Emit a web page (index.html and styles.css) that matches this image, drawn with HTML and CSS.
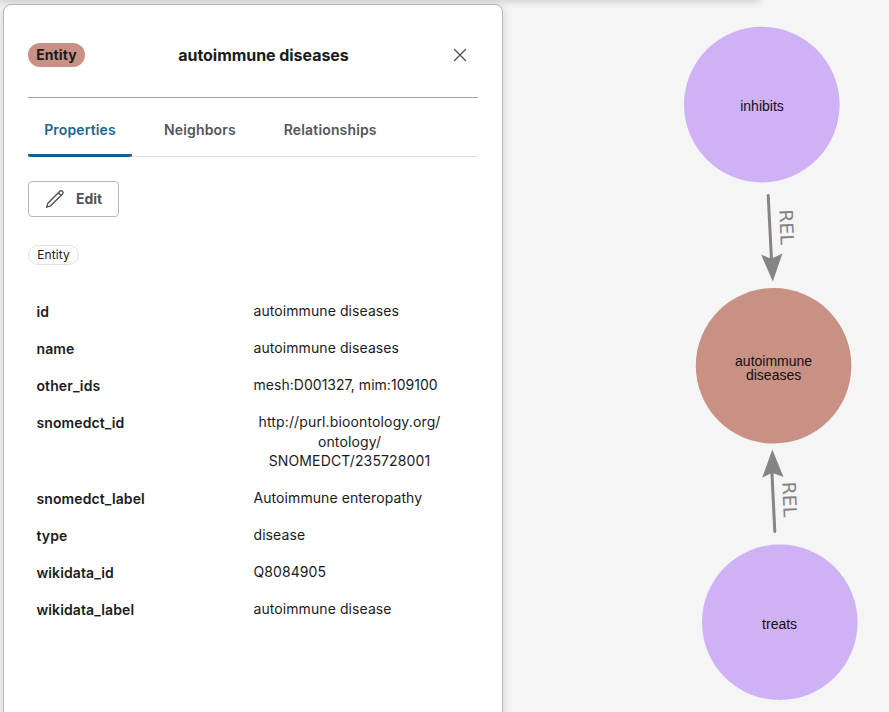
FILE: index.html
```html
<!DOCTYPE html>
<html lang="en">
<head>
<meta charset="utf-8">
<title>autoimmune diseases</title>
<link rel="stylesheet" href="styles.css">
</head>
<body>
<div class="toolbar-shadow"></div>
<main class="layout">
  <section class="panel">
    <header class="panel-header">
      <span class="tag">Entity</span>
      <h1 class="title">autoimmune diseases</h1>
      <button class="close" aria-label="Close">
        <svg width="14" height="14" viewBox="0 0 14 14"><path d="M1.5 1.5 12.5 12.5M12.5 1.5 1.5 12.5" fill="none" stroke="#535660" stroke-width="1.4" stroke-linecap="round"/></svg>
      </button>
    </header>
    <nav class="tabs">
      <a class="tab active">Properties</a>
      <a class="tab">Neighbors</a>
      <a class="tab">Relationships</a>
    </nav>
    <button class="edit">
      <svg width="20" height="20" viewBox="0 0 20 20" fill="none" stroke="#50535b" stroke-width="1.4" stroke-linejoin="round" stroke-linecap="round"><path d="M1.6 18.2 2.7 14.6 14.8 2.3Q16.2 1.1 17.5 2.3T17.6 5.1L5.3 17.1ZM13.4 3.8 16 6.6"/></svg>
      <span>Edit</span>
    </button>
    <span class="chip">Entity</span>
    <dl class="props">
      <div class="row"><dt>id</dt><dd>autoimmune diseases</dd></div>
      <div class="row"><dt>name</dt><dd>autoimmune diseases</dd></div>
      <div class="row"><dt>other_ids</dt><dd class="mixed">mesh:D001327, mim:109100</dd></div>
      <div class="row"><dt>snomedct_id</dt><dd class="link">http://purl.bioontology.org/<br>ontology/<br>SNOMEDCT/235728001</dd></div>
      <div class="row"><dt>snomedct_label</dt><dd>Autoimmune enteropathy</dd></div>
      <div class="row"><dt>type</dt><dd>disease</dd></div>
      <div class="row"><dt>wikidata_id</dt><dd>Q8084905</dd></div>
      <div class="row"><dt>wikidata_label</dt><dd>autoimmune disease</dd></div>
    </dl>
  </section>
  <svg class="graph" width="386" height="712" viewBox="503 0 386 712">
    <circle cx="761.8" cy="104.6" r="77.8" fill="#ceb2f5"/>
    <circle cx="773.6" cy="365.8" r="77.8" fill="#c89184"/>
    <circle cx="779.8" cy="622.3" r="77.8" fill="#ceb2f5"/>
    <g stroke="#848484" stroke-width="3" stroke-linecap="round">
      <path d="M768.2 195.5 771.4 258"/>
      <path d="M774.8 531.5 771.9 472"/>
    </g>
    <g fill="#848484">
      <path d="M772.8 281.5 761 254.5 771.4 258.8 782.4 253.5Z"/>
      <path d="M772.3 449.5 762.2 477.8 772 472.8 783.5 477Z"/>
    </g>
    <g class="edge-label">
      <text transform="translate(779.2 209.8) rotate(87.4)" textLength="35.4" lengthAdjust="spacingAndGlyphs">REL</text>
      <text transform="translate(782.2 482) rotate(87.4)" textLength="35.4" lengthAdjust="spacingAndGlyphs">REL</text>
    </g>
    <g class="node-label">
      <text x="762" y="110.8">inhibits</text>
      <text x="773.6" y="365.8"><tspan x="773.6">autoimmune</tspan><tspan x="773.6" dy="14">diseases</tspan></text>
      <text x="779.6" y="628.6">treats</text>
    </g>
  </svg>
</main>
</body>
</html>
```
FILE: styles.css
```css
* { box-sizing: border-box; }
body {
  margin: 0;
  height: 712px;
  overflow: hidden;
  background: #f5f5f5;
  color: #1b1b1d;
  font-family: Inter, "Liberation Sans", sans-serif;
}
.toolbar-shadow {
  position: absolute;
  top: -20px;
  left: -20px;
  width: 779px;
  height: 20px;
  box-shadow: 0 1px 8px rgba(0, 0, 0, .2);
}
.layout {
  position: relative;
  display: flex;
  height: 712px;
  padding-left: 3px;
}
.panel {
  flex: none;
  width: 500px;
  height: 740px;
  margin-top: 4px;
  padding: 0 24px;
  background: #fff;
  border: 1px solid #b5b7ba;
  border-radius: 8px;
  box-shadow: 0 3px 10px rgba(20, 20, 50, .16);
}
.panel-header {
  display: flex;
  align-items: center;
  justify-content: space-between;
  height: 93px;
  padding-top: 8px;
  border-bottom: 1px solid #a2a4a8;
}
.tag {
  width: 57px;
  height: 24px;
  border-radius: 12px;
  background: #c89184;
  font-size: 14px;
  font-weight: 700;
  line-height: 24px;
  text-align: center;
  letter-spacing: .1px;
}
.title {
  margin: 0 11px 0 0;
  font-size: 16px;
  font-weight: 700;
  letter-spacing: -.05px;
}
button { font-family: inherit; background: none; }
.close {
  display: flex;
  border: 0;
  margin-right: 11px;
  padding: 0;
}
.tabs {
  display: flex;
  height: 59px;
  border-bottom: 1px solid #e0e1e3;
}
.tab {
  display: flex;
  justify-content: center;
  height: 59px;
  padding: 0 16px;
  margin-right: 16px;
  color: #53565c;
  font-size: 14px;
  font-weight: 600;
  line-height: 64px;
  letter-spacing: .15px;
}
.tab.active {
  color: #1b6694;
  background: linear-gradient(#17608b, #17608b) bottom / 100% 3px no-repeat;
  border-radius: 2px;
  width: 104px;
}
.edit {
  display: flex;
  align-items: center;
  gap: 11px;
  width: 91px;
  height: 36px;
  margin-top: 24px;
  padding: 0 0 1px 16px;
  border: 1px solid #b5b7ba;
  border-radius: 4px;
  color: #50535b;
  font-size: 14px;
  font-weight: 700;
}
.chip {
  display: block;
  width: 51px;
  height: 20px;
  margin-top: 28px;
  border: 1px solid #e0e1e3;
  border-radius: 10px;
  font-size: 12px;
  line-height: 18px;
  text-align: center;
  letter-spacing: .1px;
}
.props { margin: 27.4px 0 0; padding: 0 8.5px; }
.row {
  display: grid;
  grid-template-columns: 217px max-content;
  padding: 8.5px 0;
  font-size: 14px;
  line-height: 20px;
}
dt { font-weight: 600; position: relative; top: 1px; letter-spacing: .1px; }
dd { margin: 0; letter-spacing: .08px; }
.mixed { letter-spacing: .03px; }
.link { text-align: center; padding-left: 5px; line-height: 19.8px; letter-spacing: .14px; }
.graph { flex: none; }
.node-label {
  font: 14px "Liberation Sans", sans-serif;
  text-anchor: middle;
  fill: #111;
}
.edge-label {
  font: 18.5px "DejaVu Sans", sans-serif;
  fill: #848484;
}
```
